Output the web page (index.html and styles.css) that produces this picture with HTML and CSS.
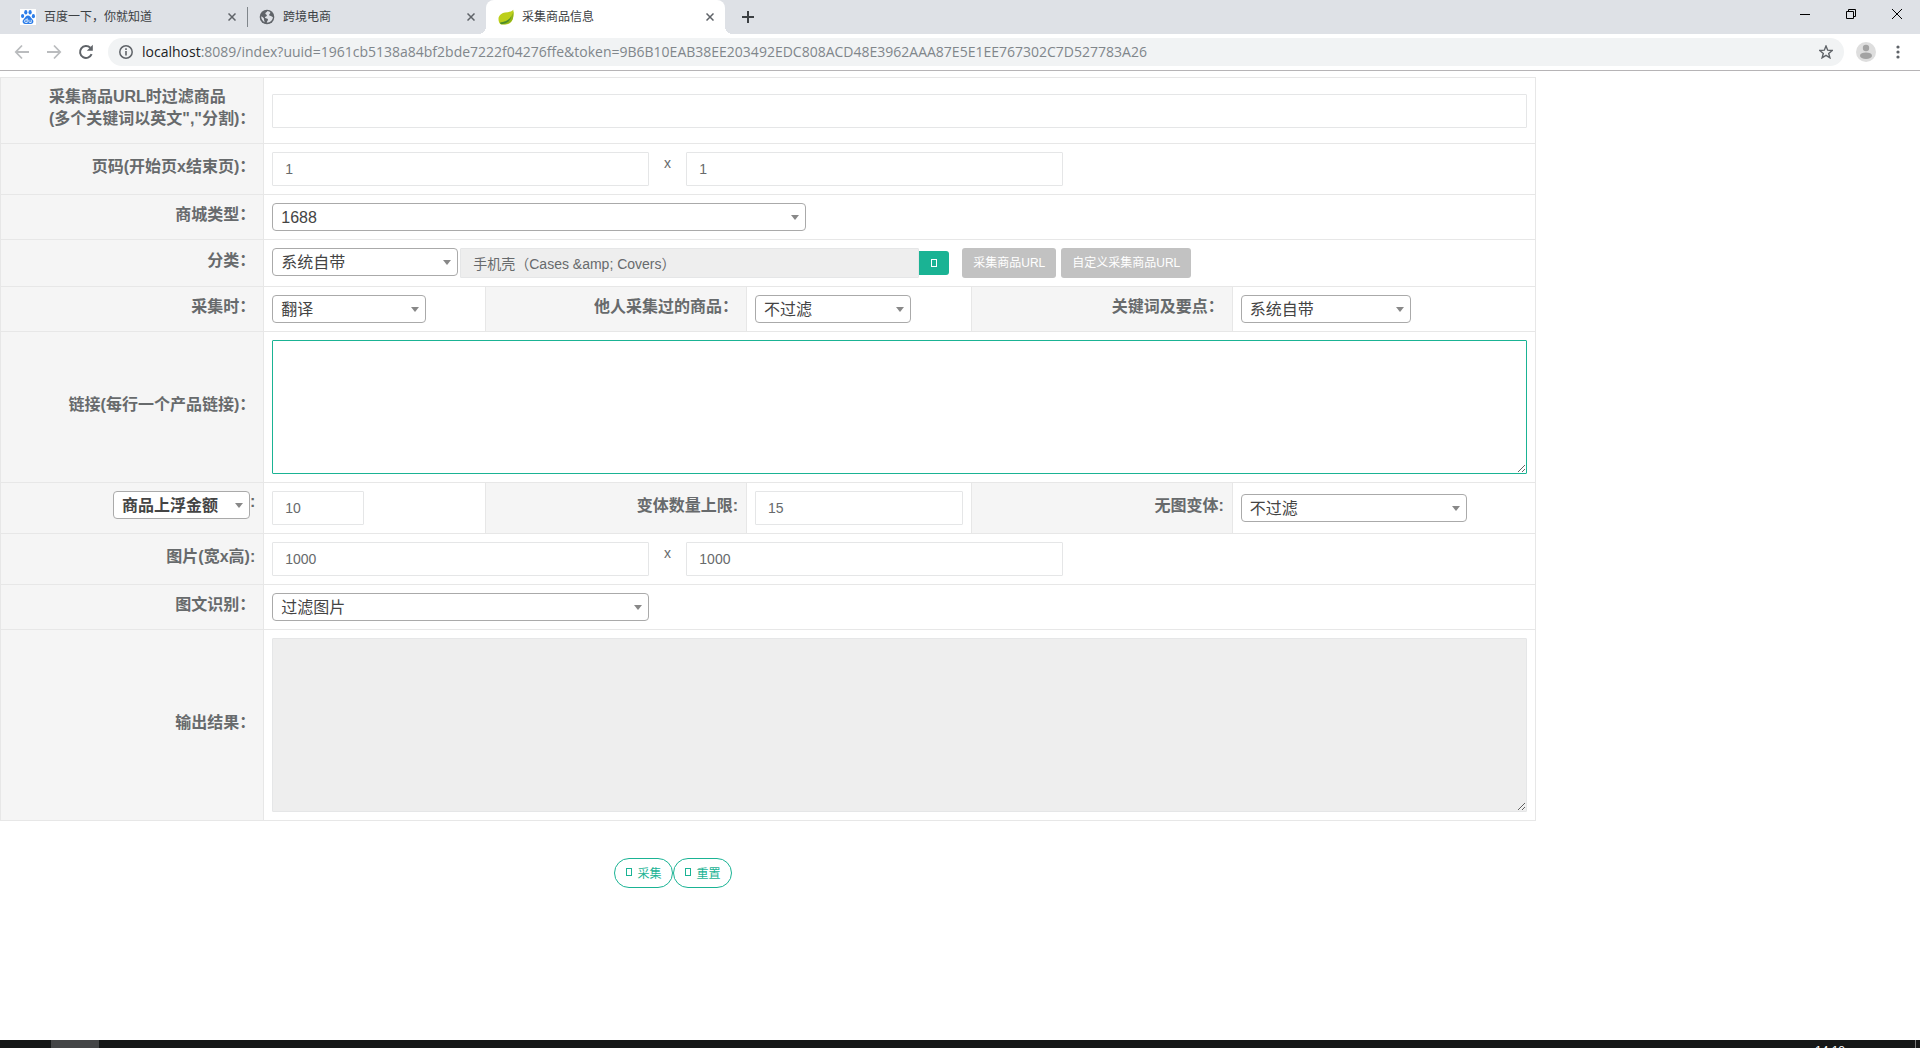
FILE: index.html
```html
<!DOCTYPE html>
<html lang="zh-CN">
<head>
<meta charset="utf-8">
<title>采集商品信息</title>
<link rel="stylesheet" href="styles.css">
</head>
<body>
<header class="browser">
  <div class="tabstrip">
    <div class="tab">
      <svg class="tab-icon" viewBox="0 0 16 16" aria-hidden="true"><rect width="16" height="16" fill="#fff"/><g fill="#2b7de9"><ellipse cx="2.6" cy="7" rx="1.6" ry="2.1"/><ellipse cx="5.8" cy="3.3" rx="1.6" ry="2.2"/><ellipse cx="10.1" cy="3.3" rx="1.6" ry="2.2"/><ellipse cx="13.4" cy="7.2" rx="1.6" ry="2.1"/><path d="M8 6.6c2 0 2.4 1.8 3.9 3.100 1.300 1.200 1.800 2.300 1.300 3.800-.6 1.700-2.700 1.700-5.200 1.500-2.500.2-4.600.2-5.200-1.500-.5-1.500 0-2.600 1.300-3.800C5.600 8.400 6 6.600 8 6.600z"/></g><path d="M7.200 9.300v4.200H5.900a1.300 1.300 0 1 1 0-2.700h1.300M8.900 10.800v1.700q0 1 1 1h1.300v-2.700" fill="none" stroke="#fff" stroke-width=".8"/></svg>
      <span class="tab-title">百度一下，你就知道</span>
      <button class="tab-close" aria-label="关闭标签页"><svg width="8" height="8" viewBox="0 0 8 8"><path d="M.5.5l7 7M7.500.5l-7 7" stroke="#5f6368" stroke-width="1.500"/></svg></button>
    </div>
    <div class="tab tab-divided">
      <svg class="tab-icon" viewBox="0 0 16 16" aria-hidden="true"><circle cx="8" cy="8" r="7.300" fill="#5f6368"/><path d="M8.500 2.100c-.4 1.400-2 1.100-2.200 2.300-.1 1 1.700.8 1.600 2-.1 1-1.400.9-1.900 1.700-.4.700.6 1.300 1.600 1.300 1.400 0 1.700 1.100 1.100 2-.5.800-.8 1.300-.9 2.400 3.300-.2 6-2.600 6.100-5.800-1.300-.3-1.600-1.300-2.800-1.300-1.300 0-1.200-1.500-.3-2 .8-.5.600-1.300-.1-1.900zM2.200 7.200c1 .3 1.600 1 2.400 1.900.8 1 .1 1.500.7 2.600l.4 1.500C3.700 12.200 2 9.800 2.200 7.200z" fill="#dee1e6"/></svg>
      <span class="tab-title">跨境电商</span>
      <button class="tab-close" aria-label="关闭标签页"><svg width="8" height="8" viewBox="0 0 8 8"><path d="M.5.5l7 7M7.500.5l-7 7" stroke="#5f6368" stroke-width="1.500"/></svg></button>
    </div>
    <div class="tab tab-active">
      <svg class="tab-icon" viewBox="0 0 16 16" aria-hidden="true"><path d="M15.200.8c-1.700 2.300-4.600 2-8 2.700C3.200 4.300.5 6.600.5 10c0 2.300.8 4.400 2.400 5.300 5.300.8 10.600-.3 12-5.500.8-3 .9-6.300.3-9z" fill="#bccf1b"/><path d="M13.600 6.500C12.400 10 9 12.400 2.300 13.300l1.200 1.900c5.500.4 10-1.200 11.200-5.400.6-2 .9-5 .7-7.300-.3 1.500-.9 2.800-1.800 4z" fill="#8fb31a"/><path d="M1.800 13.800C7.500 13 11.300 11.300 13.200 7c-.7 4.800-4.600 7.800-10.300 8.300z" fill="#4c8c2b"/></svg>
      <span class="tab-title">采集商品信息</span>
      <button class="tab-close" aria-label="关闭标签页"><svg width="8" height="8" viewBox="0 0 8 8"><path d="M.5.5l7 7M7.500.5l-7 7" stroke="#5f6368" stroke-width="1.500"/></svg></button>
    </div>
    <button class="new-tab" aria-label="新建标签页"><svg width="12" height="12" viewBox="0 0 12 12"><path d="M6 0v12M0 6h12" stroke="#3c4043" stroke-width="2"/></svg></button>
    <div class="window-controls">
      <button aria-label="最小化"><svg width="10" height="10" viewBox="0 0 10 10"><path d="M0 5.500h10" stroke="#000"/></svg></button>
      <button aria-label="还原"><svg width="10" height="10" viewBox="0 0 10 10"><path d="M.5 2.500h7v7h-7zM2.500 2.500v-2h7v7h-2" fill="none" stroke="#000"/></svg></button>
      <button aria-label="关闭"><svg width="10" height="10" viewBox="0 0 10 10"><path d="M0 0l10 10M10 0L0 10" stroke="#000"/></svg></button>
    </div>
  </div>
  <div class="toolbar">
    <button class="tool" aria-label="后退"><svg width="16" height="16" viewBox="0 0 16 16"><path d="M15 8H2M8 1.500L1.800 8 8 14.500" fill="none" stroke="#babcbe" stroke-width="1.800"/></svg></button>
    <button class="tool" aria-label="前进"><svg width="16" height="16" viewBox="0 0 16 16"><path d="M1 8h13M8 1.500L14.200 8 8 14.500" fill="none" stroke="#babcbe" stroke-width="1.800"/></svg></button>
    <button class="tool" aria-label="刷新"><svg width="16" height="16" viewBox="0 0 16 16"><path d="M13.600 10.200A6 6 0 1 1 12.300 3.700" fill="none" stroke="#5f6368" stroke-width="2"/><path d="M14.800.8v6H8.800z" fill="#5f6368"/></svg></button>
    <div class="omnibox">
      <svg width="14" height="14" viewBox="0 0 14 14" aria-hidden="true"><circle cx="7" cy="7" r="6.200" fill="none" stroke="#5f6368" stroke-width="1.500"/><path d="M7 6v4.500M7 3.300v1.600" stroke="#5f6368" stroke-width="1.600"/></svg>
      <span class="url"><span class="url-host">localhost</span>:8089/index?uuid=1961cb5138a84bf2bde7222f04276ffe&amp;token=9B6B10EAB38EE203492EDC808ACD48E3962AAA87E5E1EE767302C7D527783A26</span>
      <svg width="14" height="14" viewBox="0 0 14 14" aria-hidden="true"><path d="M7 1l1.700 4.200 4.500.3-3.500 2.900 1.200 4.400L7 10.400l-3.900 2.400 1.200-4.400L.8 5.500l4.500-.3z" fill="none" stroke="#5f6368" stroke-width="1.400"/></svg>
    </div>
    <svg class="avatar" width="20" height="20" viewBox="0 0 20 20" aria-hidden="true"><circle cx="10" cy="10" r="10" fill="#dedede"/><circle cx="10" cy="6" r="3.200" fill="#a3a3a3"/><ellipse cx="10" cy="13.700" rx="6" ry="3.300" fill="#a3a3a3"/></svg>
    <button class="menu" aria-label="菜单"><svg width="4" height="14" viewBox="0 0 4 14"><g fill="#5f6368"><circle cx="2" cy="2" r="1.600"/><circle cx="2" cy="7" r="1.600"/><circle cx="2" cy="12" r="1.600"/></g></svg></button>
  </div>
</header>

<main class="page">
  <form>
    <table class="form-table">
      <colgroup>
        <col class="col-label"><col class="col-a"><col class="col-label-b"><col class="col-b"><col class="col-label-b"><col>
      </colgroup>
      <tr>
        <th><label for="filter">采集商品URL时过滤商品<br>(多个关键词以英文","分割)：</label></th>
        <td colspan="5"><input class="text wide" id="filter" type="text"></td>
      </tr>
      <tr>
        <th><label for="page-start">页码(开始页x结束页)：</label></th>
        <td colspan="5">
          <div class="pair"><input class="text" id="page-start" type="text" value="1"><span class="times">x</span><input class="text" type="text" value="1" aria-label="结束页"></div>
        </td>
      </tr>
      <tr>
        <th><label for="mall">商城类型：</label></th>
        <td colspan="5"><select class="select select-mall" id="mall"><option>1688</option></select></td>
      </tr>
      <tr>
        <th><label for="category">分类：</label></th>
        <td colspan="5">
          <div class="category">
            <select class="select select-category" id="category"><option>系统自带</option></select>
            <div class="picker"><input class="text picker-text" type="text" readonly value="手机壳（Cases &amp;amp; Covers）" aria-label="分类名称"><button class="picker-button" type="button" aria-label="选择分类"><span class="glyph"></span></button></div>
            <div class="url-buttons"><button class="disabled-button" type="button" disabled>采集商品URL</button><button class="disabled-button" type="button" disabled>自定义采集商品URL</button></div>
          </div>
        </td>
      </tr>
      <tr>
        <th><label for="translate">采集时：</label></th>
        <td><select class="select select-translate" id="translate"><option>翻译</option></select></td>
        <th><label for="others">他人采集过的商品：</label></th>
        <td><select class="select select-others" id="others"><option>不过滤</option></select></td>
        <th><label for="keywords">关键词及要点：</label></th>
        <td><select class="select select-keywords" id="keywords"><option>系统自带</option></select></td>
      </tr>
      <tr>
        <th><label for="links">链接(每行一个产品链接)：</label></th>
        <td colspan="5"><textarea class="area area-links" id="links"></textarea></td>
      </tr>
      <tr>
        <th>
          <div class="markup"><select class="select select-markup" aria-label="上浮方式"><option>商品上浮金额</option></select><label for="markup">:</label></div>
        </th>
        <td><input class="text text-short" id="markup" type="text" value="10"></td>
        <th><label for="variants">变体数量上限:</label></th>
        <td><input class="text wide" id="variants" type="text" value="15"></td>
        <th><label for="no-image">无图变体:</label></th>
        <td><select class="select select-image" id="no-image"><option>不过滤</option></select></td>
      </tr>
      <tr>
        <th><label for="image-width">图片(宽x高):</label></th>
        <td colspan="5">
          <div class="pair"><input class="text" id="image-width" type="text" value="1000"><span class="times">x</span><input class="text" type="text" value="1000" aria-label="高"></div>
        </td>
      </tr>
      <tr>
        <th><label for="ocr">图文识别：</label></th>
        <td colspan="5"><select class="select select-ocr" id="ocr"><option>过滤图片</option></select></td>
      </tr>
      <tr>
        <th><label for="output">输出结果：</label></th>
        <td colspan="5"><textarea class="area area-output" id="output" readonly></textarea></td>
      </tr>
    </table>
    <div class="actions">
      <button class="pill" type="button"><span class="glyph"></span>采集</button><button class="pill" type="reset"><span class="glyph"></span>重置</button>
    </div>
  </form>
</main>

<footer class="taskbar">
  <span class="task-active"></span>
  <span class="clock">14:18</span>
  <span class="show-desktop"></span>
</footer>
</body>
</html>
```

FILE: styles.css
```css
*, *::before, *::after { box-sizing: border-box; }

body {
  margin: 0;
  height: 100vh;
  display: flex;
  flex-direction: column;
  background: #fff;
  color: #676a6c;
  font: 14px/20px "Liberation Sans", "Noto Sans CJK SC", sans-serif;
}

button, input, select, textarea { font-family: inherit; margin: 0; }
button { border: 0; padding: 0; background: none; }
svg { display: block; flex: none; }

/* Browser frame */
.browser { flex: none; border-bottom: 1px solid #b6b4b6; }

.tabstrip {
  display: flex;
  height: 34px;
  padding-left: 8px;
  background: #dee1e6;
}

.tab {
  position: relative;
  display: flex;
  align-items: center;
  gap: 8px;
  width: 239px;
  padding: 0 11px 0 12px;
  color: #3c4043;
  font-size: 12px;
}
.tab-icon { width: 16px; height: 16px; }
.tab-title { flex: 1; }
.tab-close { display: block; }
.tab-divided::before {
  content: "";
  position: absolute;
  left: 0;
  top: 7px;
  width: 1px;
  height: 20px;
  background: #80868b;
}
.tab-active { background: #fff; border-radius: 8px 8px 0 0; }
.tab-active::before, .tab-active::after {
  content: "";
  position: absolute;
  bottom: 0;
  width: 8px;
  height: 8px;
}
.tab-active::before { right: 100%; background: radial-gradient(circle at 0 0, #dee1e6 8px, #fff 8px); }
.tab-active::after { left: 100%; background: radial-gradient(circle at 100% 0, #dee1e6 8px, #fff 8px); }

.new-tab { margin-left: 17px; }

.window-controls { display: flex; margin-left: auto; }
.window-controls button {
  display: flex;
  justify-content: center;
  width: 46px;
  padding-top: 9px;
}

.toolbar {
  display: flex;
  align-items: center;
  height: 36px;
  padding: 0 14px;
}
.tool { width: 16px; margin-right: 16px; }
.omnibox {
  flex: 1;
  display: flex;
  align-items: center;
  gap: 9px;
  height: 28px;
  margin-right: 12px;
  margin-left: -2px;
  padding: 0 11px;
  border-radius: 14px;
  background: #f1f3f4;
}
.url {
  flex: 1;
  color: #80868b;
  font-family: "Open Sans", sans-serif;
  font-size: 14px;
  white-space: nowrap;
}
.url-host { color: #202124; }
.menu { margin-left: 20px; margin-right: 6px; }

/* Form */
.page { flex: 1; padding-top: 6px; }

.form-table {
  width: 80%;
  table-layout: fixed;
  border-collapse: collapse;
}
.col-label { width: 17.15%; }
.col-a { width: 14.45%; }
.col-label-b { width: 17%; }
.col-b { width: 14.65%; }

.form-table th, .form-table td {
  padding: 8px;
  border: 1px solid #e7e7e7;
  text-align: left;
  vertical-align: middle;
}
.form-table th {
  background: #f5f5f5;
  font-size: 16px;
  line-height: 22px;
  text-align: right;
}
.form-table label {
  display: inline-block;
  margin-bottom: 5px;
  text-align: left;
  vertical-align: top;
}

.text {
  display: block;
  height: 34px;
  padding: 0 12px;
  border: 1px solid #e5e6e7;
  border-radius: 1px;
  background: #fff;
  color: #676a6c;
  font-size: 14px;
}
.wide { width: 100%; }
.text-short { width: 92px; }

.pair { display: flex; align-items: flex-start; }
.pair .text { width: 30%; }
.times { width: 3%; text-align: center; line-height: 22px; }

.select {
  display: block;
  height: 28px;
  padding: 0 20px 0 8px;
  border: 1px solid #aaa;
  border-radius: 4px;
  appearance: none;
  background: #fff url("data:image/svg+xml,%3Csvg xmlns='http://www.w3.org/2000/svg' width='8' height='5'%3E%3Cpath d='M0 0h8L4 5z' fill='%23888'/%3E%3C/svg%3E") no-repeat right 6px center;
  color: #444;
  font-size: 16px;
}
.select-mall { width: 534px; }
.select-category { width: 186px; }
.select-translate { width: 154px; }
.select-others { width: 156px; }
.select-keywords { width: 170px; }
.select-markup { width: 137px; font-weight: bold; }
.select-image { width: 226px; }
.select-ocr { width: 30%; }

.category { display: flex; align-items: flex-start; gap: 2px; }
.picker { display: flex; align-items: center; }
.picker-text { width: 459px; height: 30px; background: #eee; }
.picker-button {
  display: flex;
  align-items: center;
  justify-content: center;
  width: 30px;
  height: 24px;
  border-radius: 0 3px 3px 0;
  background: #1ab394;
  color: #fff;
}
.url-buttons { display: flex; gap: 5px; margin-left: 11px; }
.disabled-button {
  height: 30px;
  padding: 0 11px 4px;
  border-radius: 3px;
  background: #c2c2c2;
  color: #fff;
  font-size: 12px;
}

.glyph {
  display: inline-block;
  width: 6px;
  height: 8px;
  border: 1px solid;
}

.area {
  display: block;
  width: 100%;
  padding: 6px 12px;
  border: 1px solid #e5e6e7;
  border-radius: 1px;
  outline: 0;
}
.area-links { height: 134px; border-color: #1ab394; }
.area-output { height: 174px; background: #eee; }

.markup { display: flex; justify-content: flex-end; align-items: flex-start; height: 34px; }

.actions { display: flex; padding: 37px 0 0 32%; }
.pill {
  display: flex;
  align-items: center;
  gap: 5px;
  height: 30px;
  padding: 0 11px 2px;
  border: 1px solid #1ab394;
  border-radius: 15px;
  color: #1ab394;
  font-size: 12px;
}

/* Desktop taskbar, cut off by the lower edge of the window */
.taskbar {
  flex: none;
  display: flex;
  justify-content: flex-end;
  height: 8px;
  padding-left: 51px;
  padding-right: 4px;
  overflow: hidden;
  background: #151717;
  color: #fff;
}
.task-active { width: 48px; margin-right: auto; background: #444546; }
.clock { margin-right: 70px; padding-top: 4px; font-size: 12px; line-height: 14px; }
.show-desktop { width: 1px; background: #7a7a7a; }
```
